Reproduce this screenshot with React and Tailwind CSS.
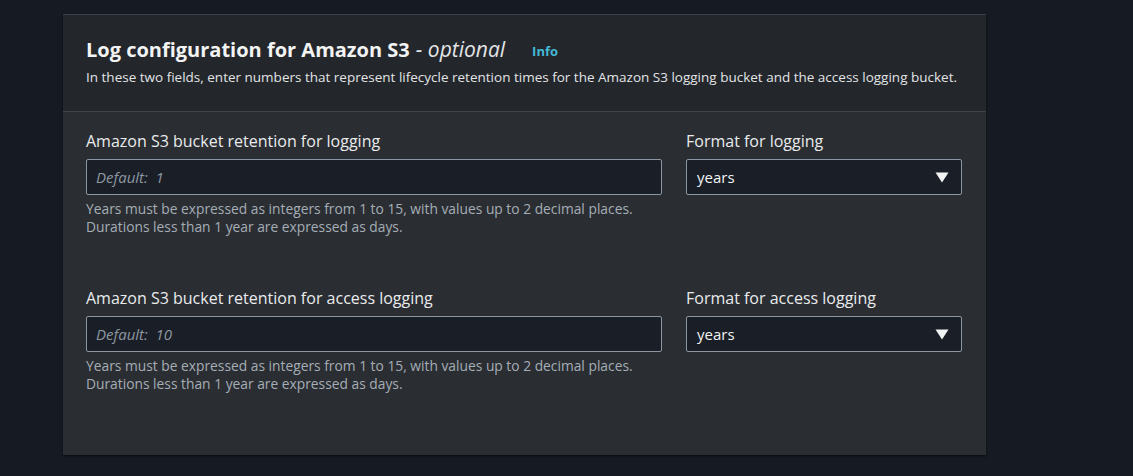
import React from "react";

const font = { fontFamily: '"Open Sans", "Noto Sans", Arial, sans-serif' };

function Caret() {
  return (
    <svg width="14" height="11" viewBox="0 0 14 11" className="shrink-0">
      <path d="M0.5 0.5 H13.5 L7 10.5 Z" fill="#f2f3f3" />
    </svg>
  );
}

function Row({ label, placeholder, formatLabel }) {
  return (
    <div className="grid grid-cols-[576px_276px] gap-x-6">
      <div className="flex flex-col">
        <div className="text-[16px] leading-[22px] text-[#e9ebed] h-[22px]">{label}</div>
        <div className="mt-[7px] h-[36px] border border-[#8c97a3] rounded-[2px] bg-[#1a1f27] flex items-center px-[9px]">
          <span className="italic text-[15px] text-[#8d97a2] whitespace-pre">{placeholder}</span>
        </div>
        <div className="mt-[5px] text-[13.8px] leading-[18px] text-[#a5adb6]">
          <div>Years must be expressed as integers from 1 to 15, with values up to 2 decimal places.</div>
          <div>Durations less than 1 year are expressed as days.</div>
        </div>
      </div>
      <div className="flex flex-col">
        <div className="text-[16px] leading-[22px] text-[#e9ebed] h-[22px]">{formatLabel}</div>
        <div className="mt-[7px] h-[36px] border border-[#8c97a3] rounded-[2px] bg-[#1a1f27] flex items-center justify-between pl-[10px] pr-[12px]">
          <span className="text-[15px] text-[#f2f3f3]">years</span>
          <Caret />
        </div>
      </div>
    </div>
  );
}

export default function App() {
  return (
    <div style={font} className="w-[1133px] h-[476px] bg-[#161a22] pt-[14px] pl-[63px] overflow-hidden">
      <div className="w-[923px] h-[441px] bg-[#2a2d32] border-t border-[#3a3f46] shadow-[0_1px_2px_rgba(0,0,0,0.6)] flex flex-col">
        <div className="bg-[#23262b] px-[23px] pt-[21px] pb-[24px] border-b border-[#3f444b]">
          <div className="flex items-center h-[28px]">
            <span className="text-[20px] font-bold text-[#f2f3f3]">Log configuration for Amazon S3</span>
            <span className="text-[21px] italic text-[#e2e4e6] ml-[6px]">- optional</span>
            <span className="ml-[27px] mt-[3px] text-[13px] font-bold text-[#44b9d6]">Info</span>
          </div>
          <div className="mt-[3px] text-[13.5px] leading-[20px] text-[#e2e4e6]">
            In these two fields, enter numbers that represent lifecycle retention times for the Amazon S3 logging bucket and the access logging bucket.
          </div>
        </div>
        <div className="px-[23px] pt-[18px] flex flex-col gap-[51px]">
          <Row label="Amazon S3 bucket retention for logging" placeholder="Default:  1" formatLabel="Format for logging" />
          <Row label="Amazon S3 bucket retention for access logging" placeholder="Default:  10" formatLabel="Format for access logging" />
        </div>
      </div>
    </div>
  );
}
